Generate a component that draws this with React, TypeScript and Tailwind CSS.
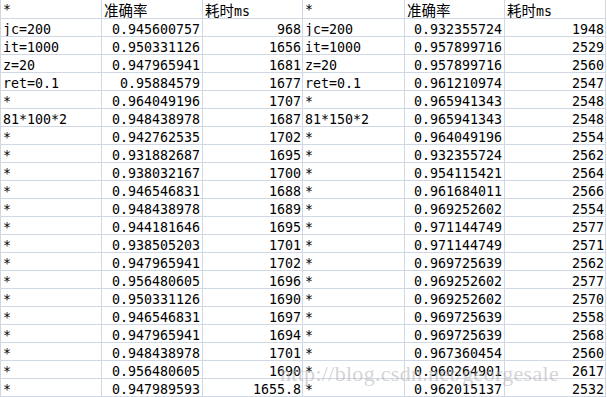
import { FC } from 'react'

type Row = [string, string, string]

const left: Row[] = [
  ['jc=200', '0.945600757', '968'],
  ['it=1000', '0.950331126', '1656'],
  ['z=20', '0.947965941', '1681'],
  ['ret=0.1', '0.95884579', '1677'],
  ['*', '0.964049196', '1707'],
  ['81*100*2', '0.948438978', '1687'],
  ['*', '0.942762535', '1702'],
  ['*', '0.931882687', '1695'],
  ['*', '0.938032167', '1700'],
  ['*', '0.946546831', '1688'],
  ['*', '0.948438978', '1689'],
  ['*', '0.944181646', '1695'],
  ['*', '0.938505203', '1701'],
  ['*', '0.947965941', '1702'],
  ['*', '0.956480605', '1696'],
  ['*', '0.950331126', '1690'],
  ['*', '0.946546831', '1697'],
  ['*', '0.947965941', '1694'],
  ['*', '0.948438978', '1701'],
  ['*', '0.956480605', '1690'],
  ['*', '0.947989593', '1655.8'],
]

const right: Row[] = [
  ['jc=200', '0.932355724', '1948'],
  ['it=1000', '0.957899716', '2529'],
  ['z=20', '0.957899716', '2560'],
  ['ret=0.1', '0.961210974', '2547'],
  ['*', '0.965941343', '2548'],
  ['81*150*2', '0.965941343', '2548'],
  ['*', '0.964049196', '2554'],
  ['*', '0.932355724', '2562'],
  ['*', '0.954115421', '2564'],
  ['*', '0.961684011', '2566'],
  ['*', '0.969252602', '2554'],
  ['*', '0.971144749', '2577'],
  ['*', '0.971144749', '2571'],
  ['*', '0.969725639', '2562'],
  ['*', '0.969252602', '2577'],
  ['*', '0.969252602', '2570'],
  ['*', '0.969725639', '2558'],
  ['*', '0.969725639', '2568'],
  ['*', '0.967360454', '2560'],
  ['*', '0.960264901', '2617'],
  ['*', '0.962015137', '2532'],
]

const cell = 'h-[18px] border-r border-b border-[#d0d7e5] overflow-hidden whitespace-nowrap pt-[5px] leading-[12px]'
const head = 'h-[19px] border-r border-b border-[#d0d7e5] overflow-hidden whitespace-nowrap pl-[2px] pt-[3px] leading-[14px]'

const HeaderCells: FC = () => (
  <>
    <div className={head}>*</div>
    <div className={head}>
      <span className="text-[14.5px] font-['Noto_Sans_CJK_SC']">准确率</span>
    </div>
    <div className={head}>
      <span className="text-[14.5px] font-['Noto_Sans_CJK_SC']">耗时</span>ms
    </div>
  </>
)

const App: FC = () => {
  return (
    <div className="relative w-[607px] h-[397px] overflow-hidden bg-white text-black text-[13.3px] font-['DejaVu_Sans_Mono','Noto_Sans_CJK_SC',monospace]">
      <div className="grid grid-cols-[101px_101px_100px_102px_100px_101px] border-l border-[#d0d7e5] w-fit">
        <HeaderCells />
        <HeaderCells />
        {left.map((row, i) => (
          <div key={i} className="contents">
            {[row, right[i]].map((r, j) => (
              <div key={j} className="contents">
                <div className={`${cell} pl-[2px]`}>{r[0]}</div>
                <div className={`${cell} pr-[2px] text-right`}>{r[1]}</div>
                <div className={`${cell} pr-[1px] text-right`}>{r[2]}</div>
              </div>
            ))}
          </div>
        ))}
      </div>
      {/* watermark */}
      <div className="absolute left-[280px] top-[363px] text-[22px] leading-[22px] tracking-[0.3px] font-['Liberation_Serif',serif] text-[#b0b0b0]/55 whitespace-nowrap pointer-events-none">
        http://blog.csdn.net/georgesale
      </div>
    </div>
  )
}

export default App
